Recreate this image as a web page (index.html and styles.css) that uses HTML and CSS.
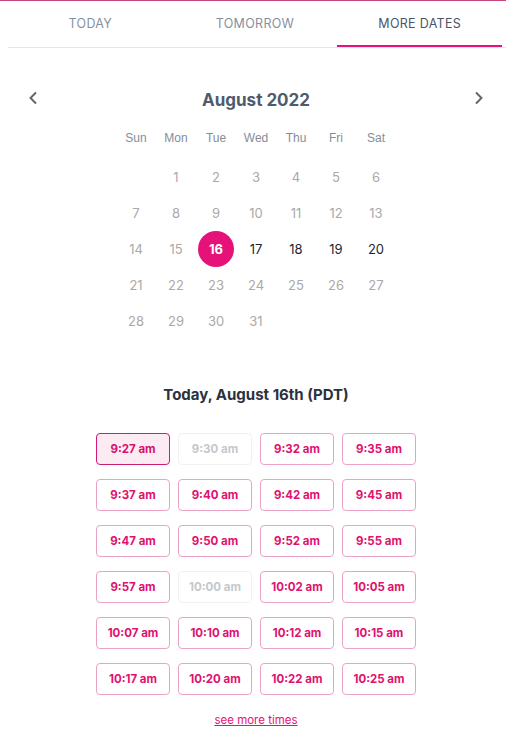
FILE: index.html
```html
<!DOCTYPE html>
<html lang="en">
<head>
    <meta charset="UTF-8">
    <meta name="viewport" content="width=device-width, initial-scale=1.0">
    <title>Book a time</title>
    <link rel="stylesheet" href="styles.css">
</head>
<body>
    <div class="tabs">
        <div class="tab">TODAY</div>
        <div class="tab">TOMORROW</div>
        <div class="tab active">MORE DATES</div>
    </div>

    <div class="content">
        <div class="month-bar">
            <button class="nav" aria-label="Previous month">
                <svg width="10" height="14" viewBox="0 0 10 14"><path d="M8 1.5 L2.5 7 L8 12.5" fill="none" stroke="#666" stroke-width="2"/></svg>
            </button>
            <div class="month">August 2022</div>
            <button class="nav" aria-label="Next month">
                <svg width="10" height="14" viewBox="0 0 10 14"><path d="M2 1.5 L7.5 7 L2 12.5" fill="none" stroke="#666" stroke-width="2"/></svg>
            </button>
        </div>

        <div class="weekdays">
            <span>Sun</span><span>Mon</span><span>Tue</span><span>Wed</span><span>Thu</span><span>Fri</span><span>Sat</span>
        </div>
        <div class="days" id="days"></div>

        <h2 class="slots-title">Today, August 16th (PDT)</h2>
        <div class="slots" id="slots"></div>

        <a class="more" href="#">see more times</a>
    </div>

    <script>
        const today = 16;
        const daysEl = document.getElementById('days');
        // August 2022 starts on a Monday
        daysEl.appendChild(document.createElement('span'));
        for (let d = 1; d <= 31; d++) {
            const cell = document.createElement('span');
            cell.innerText = d;
            if (d < today) cell.className = 'past';
            else if (d === today) cell.className = 'selected';
            else if (d <= 20) cell.className = 'open';
            else cell.className = 'past';
            daysEl.appendChild(cell);
        }

        const times = ['9:27 am', '9:30 am', '9:32 am', '9:35 am', '9:37 am', '9:40 am',
            '9:42 am', '9:45 am', '9:47 am', '9:50 am', '9:52 am', '9:55 am',
            '9:57 am', '10:00 am', '10:02 am', '10:05 am', '10:07 am', '10:10 am',
            '10:12 am', '10:15 am', '10:17 am', '10:20 am', '10:22 am', '10:25 am'];
        const taken = ['9:30 am', '10:00 am'];
        const slotsEl = document.getElementById('slots');
        times.forEach((t, i) => {
            const btn = document.createElement('button');
            btn.className = 'slot';
            if (i === 0) btn.className += ' picked';
            if (taken.includes(t)) btn.className += ' taken';
            btn.innerText = t;
            slotsEl.appendChild(btn);
        });
    </script>
</body>
</html>
```

FILE: styles.css
```css
body {
    margin: 0;
    border-top: 1px solid #c4467d;
    font-family: Inter, "Liberation Sans", sans-serif;
    background-color: #fff;
    color: #1f2933;
}
.tabs {
    display: flex;
    margin-left: 8px;
    padding-right: 4px;
    border-bottom: 1px solid #e6e6e6;
}
.tab {
    flex: 1;
    text-align: center;
    font-size: 12.5px;
    line-height: 16px;
    padding: 15px 0 13px;
    color: #87909e;
    border-bottom: 2px solid transparent;
    letter-spacing: 0.3px;
}
.tab.active {
    color: #4a5568;
    border-bottom-color: #e5127a;
}
.content {
    padding-left: 8px;
    padding-right: 2px;
    display: flex;
    flex-direction: column;
    align-items: center;
}
.month-bar {
    align-self: stretch;
    display: flex;
    align-items: center;
    justify-content: space-between;
    margin-top: 40px;
    height: 24px;
}
.nav {
    border: none;
    background: none;
    padding: 0;
    width: 10px;
    height: 14px;
    margin: -5px 16px 0 20px;
    cursor: pointer;
}
.nav:last-child {
    margin: -5px 20px 0 16px;
}
.month {
    font-size: 17px;
    font-weight: 700;
    color: #4f5b6d;
    line-height: 24px;
}
.weekdays, .days {
    display: grid;
    grid-template-columns: repeat(7, 40px);
    text-align: center;
}
.weekdays {
    margin-top: 8px;
    font-family: "Liberation Sans", Arial, sans-serif;
    font-size: 12px;
    color: #858d99;
}
.weekdays span {
    line-height: 36px;
}
.days {
    margin-top: 3px;
    grid-auto-rows: 36px;
    font-size: 13px;
}
.days span {
    display: flex;
    align-items: center;
    justify-content: center;
}
.days .past {
    color: #a9a9a9;
}
.days .open {
    color: #1f2530;
}
.days .selected {
    width: 36px;
    height: 36px;
    margin: 0 auto;
    border-radius: 50%;
    background-color: #e5127a;
    color: white;
    font-weight: 700;
}
.slots-title {
    margin: 46px 0 0;
    font-size: 15px;
    line-height: 20px;
    font-weight: 700;
    color: #2a323e;
}
.slots {
    margin-top: 28px;
    display: grid;
    grid-template-columns: repeat(4, 74px);
    grid-auto-rows: 32px;
    column-gap: 8px;
    row-gap: 14px;
}
.slot {
    font-family: Inter, "Liberation Sans", sans-serif;
    font-size: 11.5px;
    font-weight: 700;
    color: #e0116f;
    background-color: white;
    border: 1px solid #eaa3c6;
    border-radius: 4px;
    padding: 0;
    cursor: pointer;
}
.slot.picked {
    background-color: #fdebf4;
    border-color: #cf1b72;
    color: #d4136d;
}
.slot.taken {
    color: #c6c8cc;
    border-color: #f1f1f2;
}
.more {
    margin-top: 17px;
    font-size: 11.5px;
    line-height: 16px;
    color: #e5127a;
}
```
